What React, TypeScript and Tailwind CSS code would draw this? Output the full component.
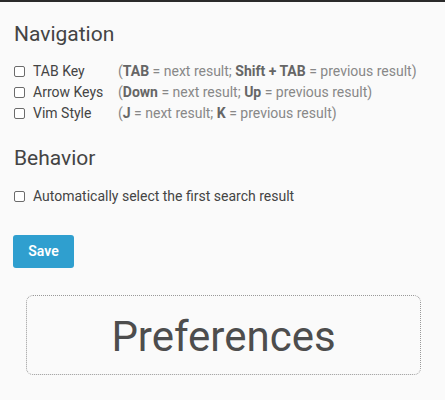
import React from "react";

function Box() {
  return <span className="inline-block w-[11px] h-[11px] border-[1.5px] border-[#6b6b6b] rounded-[2px] bg-white shrink-0" />;
}

function Row({ label, children }: { label: string; children: React.ReactNode }) {
  return (
    <div className="flex items-center h-[21px]">
      <Box />
      <span className="ml-[8px] w-[85px] text-[#444]">{label}</span>
      <span className="text-[#888]">{children}</span>
    </div>
  );
}

export default function App() {
  return (
    <div className="w-[445px] h-[400px] bg-[#fafafa] border-t-2 border-[#2a2a2a] text-[14px]" style={{ fontFamily: "Roboto, 'Liberation Sans', sans-serif" }}>
      <div className="px-[14px]">
        <h2 className="text-[21px] text-[#444] pt-[18px] leading-[28px]">Navigation</h2>
        <div className="mt-[13px]">
          <Row label="TAB Key">
            (<b className="text-[#666]">TAB</b> = next result; <b className="text-[#666]">Shift + TAB</b> = previous result)
          </Row>
          <Row label="Arrow Keys">
            (<b className="text-[#666]">Down</b> = next result; <b className="text-[#666]">Up</b> = previous result)
          </Row>
          <Row label="Vim Style">
            (<b className="text-[#666]">J</b> = next result; <b className="text-[#666]">K</b> = previous result)
          </Row>
        </div>
        <h2 className="text-[21px] text-[#444] mt-[20px] leading-[28px]">Behavior</h2>
        <div className="flex items-center h-[21px] mt-[14px]">
          <Box />
          <span className="ml-[8px] text-[#444]">Automatically select the first search result</span>
        </div>
        <button className="mt-[28px] -ml-px w-[61px] h-[33px] rounded-[3px] bg-[#2f9fcf] text-white font-semibold text-[14px]">Save</button>
      </div>
      <div className="mx-[26px] mt-[27px] w-[395px] h-[80px] border border-dotted border-[#999] rounded-[7px] flex items-center justify-center">
        <span className="text-[42px] text-[#4d4d4d] leading-none mt-[3px]">Preferences</span>
      </div>
    </div>
  );
}
